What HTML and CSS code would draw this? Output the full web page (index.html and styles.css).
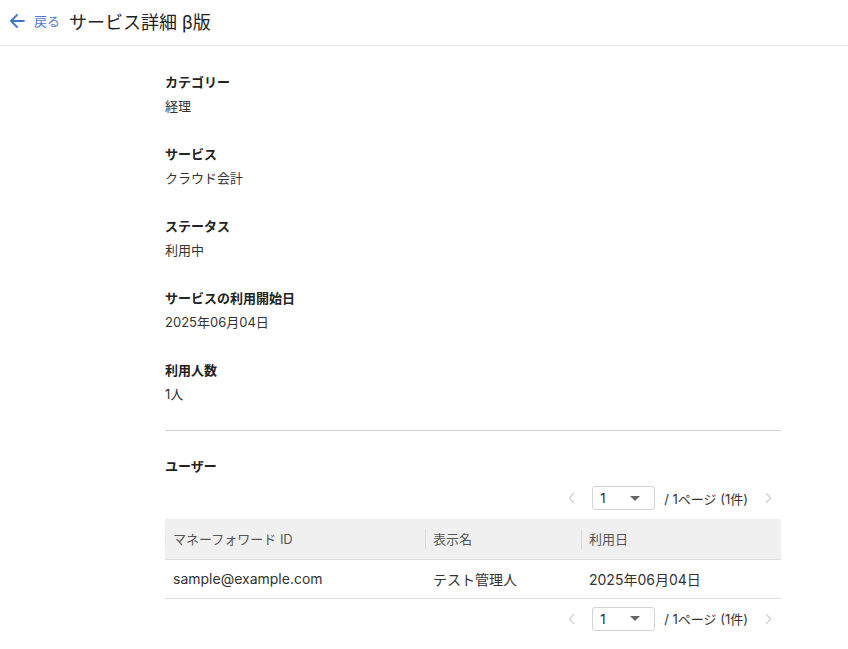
FILE: index.html
```html
<!DOCTYPE html>
<html lang="ja">
<head>
<meta charset="utf-8">
<link rel="stylesheet" href="styles.css">
</head>
<body>
<header class="topbar">
  <a class="back">
    <svg class="back-icon" width="16" height="16" viewBox="0 0 16 16"><path d="M15 8H2M8 2L2 8l6 6" fill="none" stroke="#3f74d8" stroke-width="1.8" stroke-linecap="round" stroke-linejoin="round"/></svg>
    <span class="back-text">戻る</span>
  </a>
  <h1 class="title">サービス詳細 β版</h1>
</header>
<main class="content">
  <dl class="fields">
    <div class="field"><dt>カテゴリー</dt><dd>経理</dd></div>
    <div class="field"><dt>サービス</dt><dd>クラウド会計</dd></div>
    <div class="field"><dt>ステータス</dt><dd>利用中</dd></div>
    <div class="field"><dt>サービスの利用開始日</dt><dd>2025年06月04日</dd></div>
    <div class="field"><dt>利用人数</dt><dd>1人</dd></div>
  </dl>
  <hr class="divider">
  <h2 class="section-title">ユーザー</h2>
  <div class="pager">
    <span class="chev"><svg width="8" height="12" viewBox="0 0 8 12"><path d="M6 1L1.5 6 6 11" fill="none" stroke="#d4d4d4" stroke-width="1.4"/></svg></span>
    <span class="select"><span>1</span><span class="caret"></span></span>
    <span class="pinfo">/ 1ページ (1件)</span>
    <span class="chev"><svg width="8" height="12" viewBox="0 0 8 12"><path d="M2 1l4.5 5L2 11" fill="none" stroke="#d4d4d4" stroke-width="1.4"/></svg></span>
  </div>
  <table class="users">
    <thead>
      <tr><th class="c1"><span class="th-in">マネーフォワード ID</span></th><th class="c2"><span class="th-in">表示名</span></th><th class="c3"><span class="th-in">利用日</span></th></tr>
    </thead>
    <tbody>
      <tr><td>sample@example.com</td><td>テスト管理人</td><td>2025年06月04日</td></tr>
    </tbody>
  </table>
  <div class="pager pager-bottom">
    <span class="chev"><svg width="8" height="12" viewBox="0 0 8 12"><path d="M6 1L1.5 6 6 11" fill="none" stroke="#d4d4d4" stroke-width="1.4"/></svg></span>
    <span class="select"><span>1</span><span class="caret"></span></span>
    <span class="pinfo">/ 1ページ (1件)</span>
    <span class="chev"><svg width="8" height="12" viewBox="0 0 8 12"><path d="M2 1l4.5 5L2 11" fill="none" stroke="#d4d4d4" stroke-width="1.4"/></svg></span>
  </div>
</main>
</body>
</html>
```
FILE: styles.css
```css
* { box-sizing: border-box; }
html, body { margin: 0; padding: 0; background: #fff; }
body {
  font-family: "Inter", "Noto Sans CJK JP", sans-serif;
  color: #333;
  font-size: 13px;
}
.topbar {
  height: 46px;
  border-bottom: 1px solid #e3e3e3;
  display: flex;
  align-items: center;
  padding: 0 0 4px 9px;
}
.back {
  display: flex;
  align-items: center;
  color: #3f74d8;
  cursor: pointer;
}
.back-icon { display: block; }
.back-text {
  font-size: 13px;
  margin-left: 9px;
  color: #4a7bd6;
}
.title {
  margin: 0 0 0 9px;
  font-size: 18px;
  font-weight: 400;
  color: #222;
}
.content {
  margin-left: 165px;
  width: 616px;
  padding-top: 26px;
}
.fields { margin: 0; }
.field { margin-bottom: 28px; }
.field:last-child { margin-bottom: 26px; }
.field dt {
  font-weight: 700;
  font-size: 13px;
  line-height: 20px;
  color: #222;
}
.field dd {
  margin: 4px 0 0;
  font-size: 13px;
  line-height: 20px;
  color: #333;
}
.divider {
  margin: 0;
  border: 0;
  border-top: 1px solid #cfcfcf;
}
.section-title {
  margin: 25px 0 0;
  font-size: 13px;
  line-height: 20px;
  font-weight: 700;
  color: #222;
}
.pager {
  display: flex;
  justify-content: flex-end;
  align-items: center;
  height: 24px;
  margin-top: 10px;
  padding-right: 5px;
}
.pager-bottom { margin-top: 8px; }
.chev {
  width: 16px;
  display: flex;
  justify-content: center;
}
.select {
  margin-left: 12px;
  width: 63px;
  height: 24px;
  border: 1px solid #d3d3d3;
  border-radius: 3px;
  display: flex;
  align-items: center;
  justify-content: space-between;
  padding: 0 14px 0 7px;
  font-size: 13px;
  color: #222;
}
.caret {
  width: 0; height: 0;
  border-left: 5px solid transparent;
  border-right: 5px solid transparent;
  border-top: 5px solid #666;
}
.pinfo {
  margin-left: 9px;
  margin-right: 12px;
  font-size: 13px;
  color: #333;
}
.users {
  width: 100%;
  border-collapse: collapse;
  margin-top: 9px;
}
.users th {
  background: #f0f0f0;
  height: 40px;
  font-weight: 400;
  font-size: 13px;
  color: #555;
  text-align: left;
  padding: 0;
  border-bottom: 1px solid #dedede;
}
.th-in {
  display: block;
  border-left: 1px solid #dcdcdc;
  line-height: 20px;
  padding-left: 7px;
}
.c1 .th-in { border-left-color: #e8e8e8; }
.c1 { width: 260px; }
.c2 { width: 156px; }
.users td {
  height: 39px;
  font-size: 14px;
  color: #333;
  padding: 0 0 0 8px;
  border-bottom: 1px solid #dedede;
}
```
